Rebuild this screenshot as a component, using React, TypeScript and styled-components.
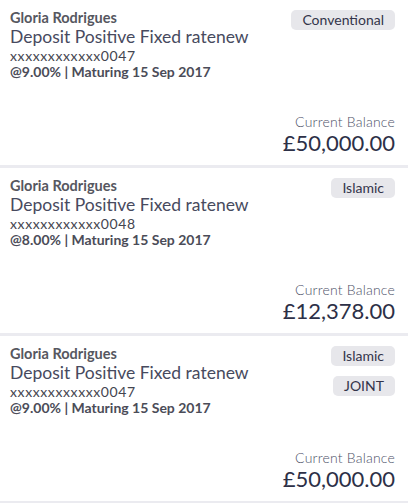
import styled, { createGlobalStyle } from "styled-components";

const GlobalStyle = createGlobalStyle`
  html, body {
    margin: 0;
    padding: 0;
    background: #ffffff;
  }
  body {
    font-family: Lato, "Open Sans", sans-serif;
    color: #3f4053;
  }
`;

const AccountList = styled.div`
  display: flex;
  flex-direction: column;
`;

const AccountCard = styled.div`
  display: flex;
  flex-direction: column;
  justify-content: space-between;
  box-sizing: border-box;
  height: 168px;
  padding: 10px 13px 10px 10px;
  border-bottom: 3px solid #ebebf0;
`;

const TopRow = styled.div`
  display: flex;
  justify-content: space-between;
  align-items: flex-start;
`;

const Details = styled.div`
  display: flex;
  flex-direction: column;
`;

const Holder = styled.div`
  font-size: 14.5px;
  font-weight: 700;
  line-height: 16px;
  color: #56575f;
`;

const ProductName = styled.div`
  font-size: 17.5px;
  font-weight: 400;
  line-height: 22px;
  color: #474a5e;
`;

const AccountNumber = styled.div`
  font-size: 14px;
  line-height: 16px;
  letter-spacing: 0.6px;
  color: #44454f;
`;

const RateLine = styled.div`
  font-size: 14px;
  font-weight: 700;
  line-height: 16px;
  color: #4b4c58;
`;

const Badges = styled.div`
  display: flex;
  flex-direction: column;
  align-items: flex-end;
  gap: 10px;
`;

const Badge = styled.span`
  display: inline-block;
  background: #e7e7eb;
  color: #33344a;
  font-size: 14px;
  line-height: 20px;
  padding: 0 11px;
  border-radius: 5px;
`;

const Balance = styled.div`
  display: flex;
  flex-direction: column;
  align-items: flex-end;
`;

const BalanceLabel = styled.div`
  font-size: 14px;
  font-weight: 300;
  line-height: 18px;
  letter-spacing: 0.2px;
  color: #4d5268;
`;

const BalanceAmount = styled.div`
  font-size: 22px;
  line-height: 24px;
  color: #2d3047;
`;

type Account = {
  holder: string;
  product: string;
  number: string;
  rate: string;
  maturity: string;
  tags: string[];
  balance: string;
};

const accounts: Account[] = [
  {
    holder: "Gloria Rodrigues",
    product: "Deposit Positive Fixed ratenew",
    number: "xxxxxxxxxxxx0047",
    rate: "9.00%",
    maturity: "15 Sep 2017",
    tags: ["Conventional"],
    balance: "£50,000.00",
  },
  {
    holder: "Gloria Rodrigues",
    product: "Deposit Positive Fixed ratenew",
    number: "xxxxxxxxxxxx0048",
    rate: "8.00%",
    maturity: "15 Sep 2017",
    tags: ["Islamic"],
    balance: "£12,378.00",
  },
  {
    holder: "Gloria Rodrigues",
    product: "Deposit Positive Fixed ratenew",
    number: "xxxxxxxxxxxx0047",
    rate: "9.00%",
    maturity: "15 Sep 2017",
    tags: ["Islamic", "JOINT"],
    balance: "£50,000.00",
  },
];

export default function App() {
  return (
    <>
      <GlobalStyle />
      <AccountList>
        {accounts.map((a, i) => (
          <AccountCard key={i}>
            <TopRow>
              <Details>
                <Holder>{a.holder}</Holder>
                <ProductName>{a.product}</ProductName>
                <AccountNumber>{a.number}</AccountNumber>
                <RateLine>
                  @{a.rate} | Maturing {a.maturity}
                </RateLine>
              </Details>
              <Badges>
                {a.tags.map((t) => (
                  <Badge key={t}>{t}</Badge>
                ))}
              </Badges>
            </TopRow>
            <Balance>
              <BalanceLabel>Current Balance</BalanceLabel>
              <BalanceAmount>{a.balance}</BalanceAmount>
            </Balance>
          </AccountCard>
        ))}
      </AccountList>
    </>
  );
}
